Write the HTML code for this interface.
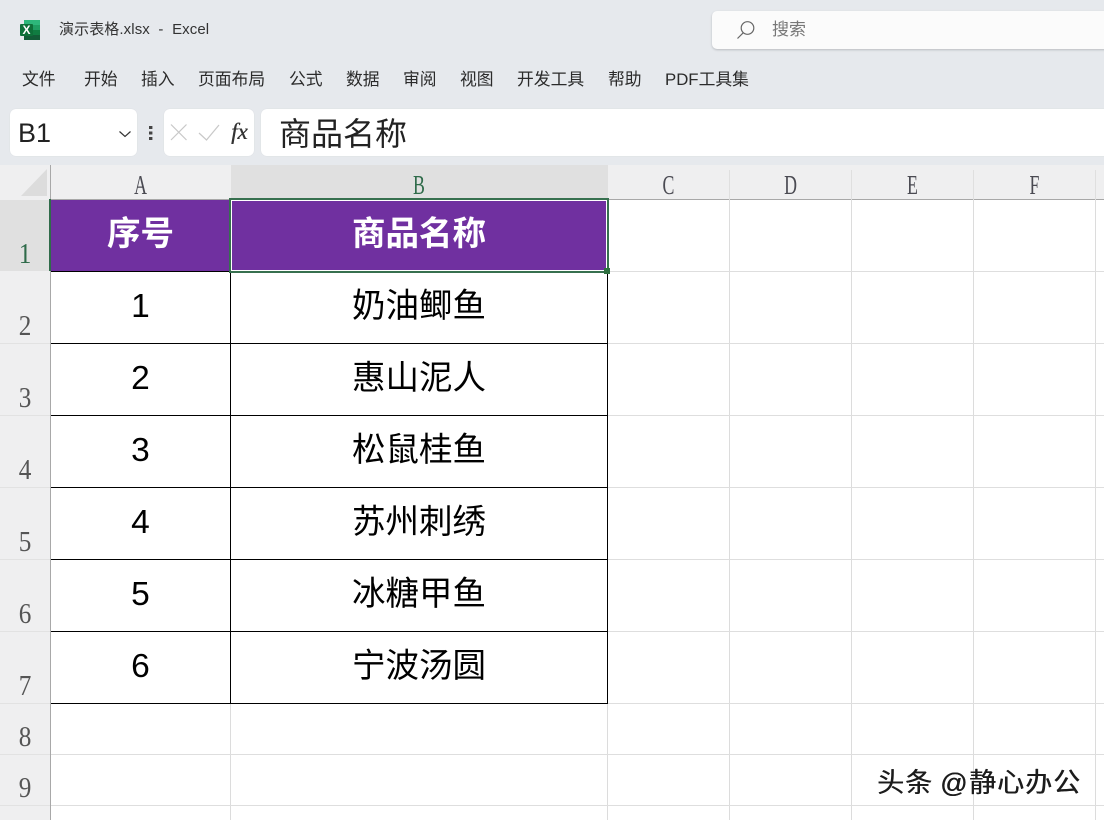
<!DOCTYPE html>
<html lang="zh"><head><meta charset="utf-8"><title>演示表格.xlsx - Excel</title>
<style>
html,body{margin:0;padding:0}
body{width:1104px;height:820px;overflow:hidden;background:#fff;position:relative;font-family:"Liberation Sans","Noto Sans CJK SC",sans-serif;color:#222}
div{position:absolute}
.m{top:68px;height:22px;line-height:24px;font-size:16.8px;color:#2b2b2b;white-space:nowrap}
.box{background:#fff;border-radius:6px;top:109px;height:47px;box-shadow:0 0 1px #cfd2d6}
.gv{top:199px;bottom:0;width:1px;background:#dcdcdc}
.gh{left:51px;right:0;height:1px;background:#dedede}
.cl{top:171px;height:28px;line-height:28px;text-align:center;font-family:"Liberation Serif",serif;font-size:27px;color:#4a4a52;transform:scaleX(.66)}
.hsep{top:170px;height:29px;width:1px;background:#dfdfdf}
.rn{left:0;width:50px;text-align:center;font-family:"Liberation Serif",serif;font-size:28px;line-height:30px;height:30px;color:#555;transform:scaleX(.9)}
.rl{left:0;width:50px;height:1px;background:#e2e2e2}
.c{height:71px;line-height:69px;text-align:center;font-size:33.5px;color:#000;white-space:nowrap}
.h{color:#fff;font-weight:bold;height:71px;line-height:70px;text-align:center;font-size:33.5px;white-space:nowrap}
.bk{background:#000}
.w{top:766px;height:34px;line-height:34px;font-size:27px;color:#1c1c1c;white-space:pre;letter-spacing:1px;text-shadow:.5px 0 0 #1c1c1c}
</style></head><body>
<div style="left:0;top:0;width:1104px;height:165px;background:#e6e9ed"></div>
<svg style="position:absolute;left:20px;top:20px" width="20" height="20" viewBox="0 0 20 20"><rect x="4" y="0" width="16" height="20" rx="1" fill="#1f9e62"/><rect x="4" y="0" width="16" height="5" fill="#2db77a"/><rect x="12" y="10" width="8" height="5" fill="#107c41"/><rect x="4" y="15" width="16" height="5" fill="#125c37"/><rect x="0" y="4" width="13" height="12" rx="1" fill="#0e7039"/><text x="6.5" y="14" font-size="12" font-weight="bold" fill="#fff" text-anchor="middle" font-family="Liberation Sans">X</text></svg>
<div style="left:59px;top:19px;height:22px;line-height:22px;font-size:15px;letter-spacing:.1px;color:#333;white-space:pre">演示表格.xlsx  -  Excel</div>
<div style="left:712px;top:11px;width:400px;height:38px;background:#fbfbfb;border-radius:5px;box-shadow:0 1px 2px #b8bbbf"></div>
<svg style="position:absolute;left:736px;top:19px" width="20" height="22" viewBox="0 0 20 22" fill="none" stroke="#666" stroke-width="1.2"><circle cx="11.5" cy="9" r="6.3"/><path d="M7.2 13.8L1.5 19.5"/></svg>
<div style="left:772px;top:19px;height:22px;line-height:22px;font-size:17px;color:#777">搜索</div>
<div class="m" style="left:22px">文件</div>
<div class="m" style="left:84px">开始</div>
<div class="m" style="left:141px">插入</div>
<div class="m" style="left:198px">页面布局</div>
<div class="m" style="left:289px">公式</div>
<div class="m" style="left:346px">数据</div>
<div class="m" style="left:403px">审阅</div>
<div class="m" style="left:460px">视图</div>
<div class="m" style="left:517px">开发工具</div>
<div class="m" style="left:608px">帮助</div>
<div class="m" style="left:665px">PDF工具集</div>
<div class="box" style="left:10px;width:127px"></div>
<div style="left:18px;top:115px;height:36px;line-height:36px;font-size:27px;color:#222">B1</div>
<svg style="position:absolute;left:118px;top:129px" width="14" height="10" viewBox="0 0 14 10" fill="none" stroke="#333" stroke-width="1.2"><path d="M1.5 2.5L7 7.5L12.5 2.5"/></svg>
<svg style="position:absolute;left:148px;top:125px" width="6" height="16"><rect x="1" y="1" width="3.4" height="3" fill="#444"/><rect x="1" y="6.5" width="3.4" height="3" fill="#444"/><rect x="1" y="12" width="3.4" height="3" fill="#444"/></svg>
<div class="box" style="left:164px;width:90px"></div>
<svg style="position:absolute;left:168px;top:120px" width="24" height="26" viewBox="0 0 24 26" fill="none" stroke="#c8c8c8" stroke-width="1.2"><path d="M3 4.5L18.5 20M18.5 4.5L3 20"/></svg>
<svg style="position:absolute;left:198px;top:120px" width="22" height="26" viewBox="0 0 22 26" fill="none" stroke="#c8c8c8" stroke-width="1.2"><path d="M1 13L8.5 20L21 5"/></svg>
<div style="left:231px;top:117px;height:30px;line-height:30px;font-family:'Liberation Serif',serif;font-style:italic;font-size:23px;color:#333;text-shadow:.4px 0 0 #333;white-space:nowrap">fx</div>
<div class="box" style="left:261px;width:850px"></div>
<div style="left:279px;top:113px;height:42px;line-height:42px;font-size:32px;color:#222;white-space:nowrap">商品名称</div>

<!-- headers -->
<div style="left:0;top:165px;width:1104px;height:34px;background:#efeff0"></div>
<div style="left:0;top:199px;width:1104px;height:1px;background:#a8a8a8"></div>
<div style="left:0;top:199px;width:50px;height:621px;background:#efeff0"></div>
<div style="left:50px;top:165px;width:1px;height:655px;background:#a8a8a8"></div>
<svg style="position:absolute;left:20px;top:168px" width="28" height="29"><path d="M27 1V28H1Z" fill="#dcdcdc"/></svg>
<div style="left:231px;top:165px;width:377px;height:34px;background:#e0e0e0"></div>
<div style="left:0;top:200px;width:50px;height:71px;background:#e0e0e0"></div>
<div class="hsep" style="left:729px"></div><div class="hsep" style="left:851px"></div><div class="hsep" style="left:973px"></div><div class="hsep" style="left:1095px"></div>
<div class="cl" style="left:51px;width:179px">A</div>
<div class="cl" style="left:231px;width:376px;color:#2f6b4a">B</div>
<div class="cl" style="left:608px;width:121px">C</div>
<div class="cl" style="left:730px;width:121px">D</div>
<div class="cl" style="left:852px;width:121px">E</div>
<div class="cl" style="left:974px;width:121px">F</div>
<div class="rn" style="top:240px;color:#2f6b4a">1</div>
<div class="rn" style="top:312px">2</div>
<div class="rn" style="top:384px">3</div>
<div class="rn" style="top:456px">4</div>
<div class="rn" style="top:528px">5</div>
<div class="rn" style="top:600px">6</div>
<div class="rn" style="top:672px">7</div>
<div class="rn" style="top:723px">8</div>
<div class="rn" style="top:774px">9</div>
<div class="rl" style="top:343px"></div><div class="rl" style="top:415px"></div><div class="rl" style="top:487px"></div><div class="rl" style="top:559px"></div><div class="rl" style="top:631px"></div><div class="rl" style="top:703px"></div><div class="rl" style="top:754px"></div><div class="rl" style="top:805px"></div>

<!-- gridlines -->
<div class="gv" style="left:729px"></div><div class="gv" style="left:851px"></div><div class="gv" style="left:973px"></div><div class="gv" style="left:1095px"></div>
<div class="gv" style="left:230px;top:703px"></div><div class="gv" style="left:607px"></div>
<div class="gh" style="top:271px"></div><div class="gh" style="top:343px"></div><div class="gh" style="top:415px"></div><div class="gh" style="top:487px"></div><div class="gh" style="top:559px"></div><div class="gh" style="top:631px"></div><div class="gh" style="top:703px"></div><div class="gh" style="top:754px"></div><div class="gh" style="top:805px"></div>

<!-- table -->
<div style="left:50px;top:200px;width:558px;height:71px;background:#7030a0"></div>
<div class="bk" style="left:51px;top:343px;width:557px;height:1px"></div>
<div class="bk" style="left:51px;top:415px;width:557px;height:1px"></div>
<div class="bk" style="left:51px;top:487px;width:557px;height:1px"></div>
<div class="bk" style="left:51px;top:559px;width:557px;height:1px"></div>
<div class="bk" style="left:51px;top:631px;width:557px;height:1px"></div>
<div class="bk" style="left:51px;top:703px;width:557px;height:1px"></div>
<div class="bk" style="left:51px;top:271px;width:557px;height:1px"></div>
<div class="bk" style="left:230px;top:271px;width:1px;height:433px"></div>
<div class="bk" style="left:607px;top:271px;width:1px;height:433px"></div>
<div style="left:49px;top:199px;width:2px;height:72px;background:#2f6b4a"></div>
<div class="h" style="left:51px;top:200px;width:179px">序号</div>
<div class="h" style="left:231px;top:200px;width:376px">商品名称</div>
<div style="left:229px;top:198px;width:380px;height:75px;box-sizing:border-box;border:2px solid #37704f;box-shadow:inset 0 0 0 1px #fff"></div>
<div style="left:604px;top:268px;width:6px;height:6px;background:#2e7040"></div>

<div class="c" style="left:51px;top:272px;width:179px">1</div>
<div class="c" style="left:231px;top:272px;width:376px">奶油鲫鱼</div>
<div class="c" style="left:51px;top:344px;width:179px">2</div>
<div class="c" style="left:231px;top:344px;width:376px">惠山泥人</div>
<div class="c" style="left:51px;top:416px;width:179px">3</div>
<div class="c" style="left:231px;top:416px;width:376px">松鼠桂鱼</div>
<div class="c" style="left:51px;top:488px;width:179px">4</div>
<div class="c" style="left:231px;top:488px;width:376px">苏州刺绣</div>
<div class="c" style="left:51px;top:560px;width:179px">5</div>
<div class="c" style="left:231px;top:560px;width:376px">冰糖甲鱼</div>
<div class="c" style="left:51px;top:632px;width:179px">6</div>
<div class="c" style="left:231px;top:632px;width:376px">宁波汤圆</div>

<div class="w" style="left:877px">头条</div>
<div class="w" style="left:940px;letter-spacing:0">@</div>
<div class="w" style="left:969px">静心办公</div>
</body></html>
